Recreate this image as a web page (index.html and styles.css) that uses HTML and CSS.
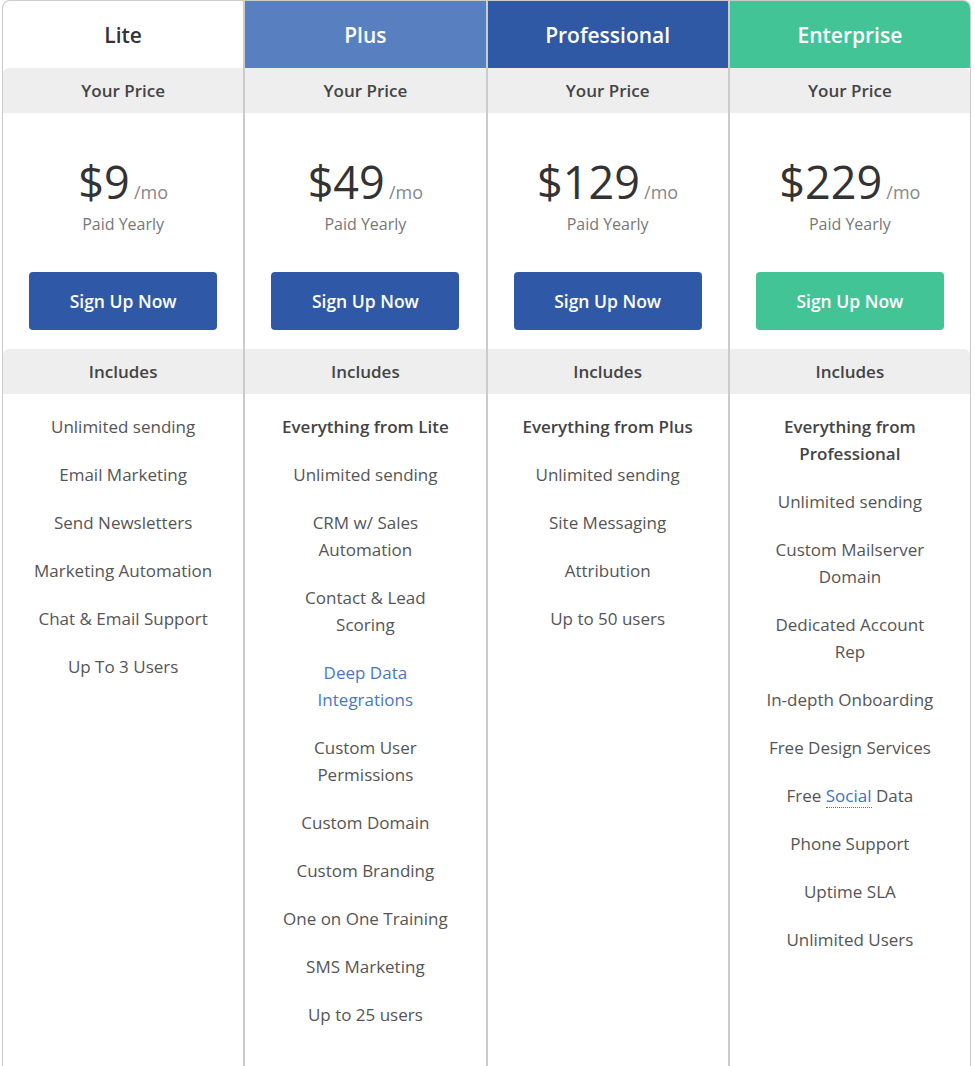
FILE: index.html
```html
<!DOCTYPE html>
<html lang="en">
<head>
<meta charset="utf-8">
<title>Pricing</title>
<link rel="stylesheet" href="styles.css">
</head>
<body>
<div class="pricing">
  <div class="plan plan-lite">
    <div class="plan-head">Lite</div>
    <div class="band">Your Price</div>
    <div class="price-block">
      <div class="price"><span class="amount">$9</span> <span class="per">/mo</span></div>
      <div class="billing">Paid Yearly</div>
      <a class="btn btn-blue" href="#">Sign Up Now</a>
    </div>
    <div class="band">Includes</div>
    <ul class="features">
      <li>Unlimited sending</li>
      <li>Email Marketing</li>
      <li>Send Newsletters</li>
      <li>Marketing Automation</li>
      <li>Chat &amp; Email Support</li>
      <li>Up To 3 Users</li>
    </ul>
  </div>
  <div class="plan plan-plus">
    <div class="plan-head">Plus</div>
    <div class="band">Your Price</div>
    <div class="price-block">
      <div class="price"><span class="amount">$49</span> <span class="per">/mo</span></div>
      <div class="billing">Paid Yearly</div>
      <a class="btn btn-blue" href="#">Sign Up Now</a>
    </div>
    <div class="band">Includes</div>
    <ul class="features">
      <li class="strong">Everything from Lite</li>
      <li>Unlimited sending</li>
      <li>CRM w/ Sales<br>Automation</li>
      <li>Contact &amp; Lead<br>Scoring</li>
      <li class="link">Deep Data<br>Integrations</li>
      <li>Custom User<br>Permissions</li>
      <li>Custom Domain</li>
      <li>Custom Branding</li>
      <li>One on One Training</li>
      <li>SMS Marketing</li>
      <li>Up to 25 users</li>
    </ul>
  </div>
  <div class="plan plan-pro">
    <div class="plan-head">Professional</div>
    <div class="band">Your Price</div>
    <div class="price-block">
      <div class="price"><span class="amount">$129</span> <span class="per">/mo</span></div>
      <div class="billing">Paid Yearly</div>
      <a class="btn btn-blue" href="#">Sign Up Now</a>
    </div>
    <div class="band">Includes</div>
    <ul class="features">
      <li class="strong">Everything from Plus</li>
      <li>Unlimited sending</li>
      <li>Site Messaging</li>
      <li>Attribution</li>
      <li>Up to 50 users</li>
    </ul>
  </div>
  <div class="plan plan-ent">
    <div class="plan-head">Enterprise</div>
    <div class="band">Your Price</div>
    <div class="price-block">
      <div class="price"><span class="amount">$229</span> <span class="per">/mo</span></div>
      <div class="billing">Paid Yearly</div>
      <a class="btn btn-green" href="#">Sign Up Now</a>
    </div>
    <div class="band">Includes</div>
    <ul class="features">
      <li class="strong">Everything from<br>Professional</li>
      <li>Unlimited sending</li>
      <li>Custom Mailserver<br>Domain</li>
      <li>Dedicated Account<br>Rep</li>
      <li>In-depth Onboarding</li>
      <li>Free Design Services</li>
      <li>Free <span class="dotted">Social</span> Data</li>
      <li>Phone Support</li>
      <li>Uptime SLA</li>
      <li>Unlimited Users</li>
    </ul>
  </div>
</div>
</body>
</html>
```

FILE: styles.css
```css
* { box-sizing: border-box; }
html, body { margin: 0; padding: 0; background: #fff; }
body {
  font-family: "Open Sans", "Noto Sans", "Liberation Sans", sans-serif;
  color: #444;
  overflow: hidden;
}
.pricing {
  display: flex;
  width: 969px;
  margin-left: 2px;
  min-height: 1100px;
}
.plan {
  flex: 1 1 0;
  border: 1px solid #cbcbcb;
  border-bottom: none;
  text-align: center;
  display: flex;
  flex-direction: column;
}
.plan-lite { border-top-left-radius: 8px; }
.plan-ent { border-top-right-radius: 8px; }
.plan-head {
  height: 67px;
  display: flex;
  align-items: center;
  justify-content: center;
  font-size: 21px;
  font-weight: 600;
  color: #333;
}
.plan-lite .plan-head { border-top-left-radius: 7px; }
.plan-ent .plan-head { border-top-right-radius: 7px; }
.plan-plus .plan-head { background: #587fc0; color: #fff; }
.plan-pro .plan-head { background: #2f58a5; color: #fff; }
.plan-ent .plan-head { background: #42c497; color: #fff; }
.band {
  height: 45px;
  display: flex;
  align-items: center;
  justify-content: center;
  background: #eeeeee;
  font-size: 17px;
  font-weight: 600;
  color: #444;
}
.plan-lite .band { border-top-left-radius: 6px; }
.plan-ent .band { border-top-right-radius: 6px; }
.price-block {
  padding: 42px 26px 19px;
  display: flex;
  flex-direction: column;
  align-items: center;
}
.price {
  height: 54px;
  line-height: 54px;
  color: #333;
  white-space: nowrap;
}
.amount { font-size: 45px; font-weight: 400; }
.per { font-size: 18px; color: #888; }
.billing {
  margin-top: 4px;
  font-size: 16px;
  line-height: 22px;
  color: #777;
}
.btn {
  margin-top: 37px;
  width: 188px;
  height: 58px;
  border-radius: 4px;
  display: flex;
  align-items: center;
  justify-content: center;
  font-size: 17.5px;
  font-weight: 600;
  color: #fff;
  text-decoration: none;
}
.btn-blue { background: #2f59a6; }
.btn-green { background: #42c497; }
.features {
  list-style: none;
  margin: 0;
  padding: 19px 6px 20px;
}
.features li {
  font-size: 17px;
  line-height: 27px;
  margin-bottom: 21px;
  color: #555;
}
.features li.strong { font-weight: 600; color: #444; }
.features li.link { color: #4a77c1; }
.dotted {
  color: #3f72c4;
  border-bottom: 1px dotted #3f72c4;
}
```
